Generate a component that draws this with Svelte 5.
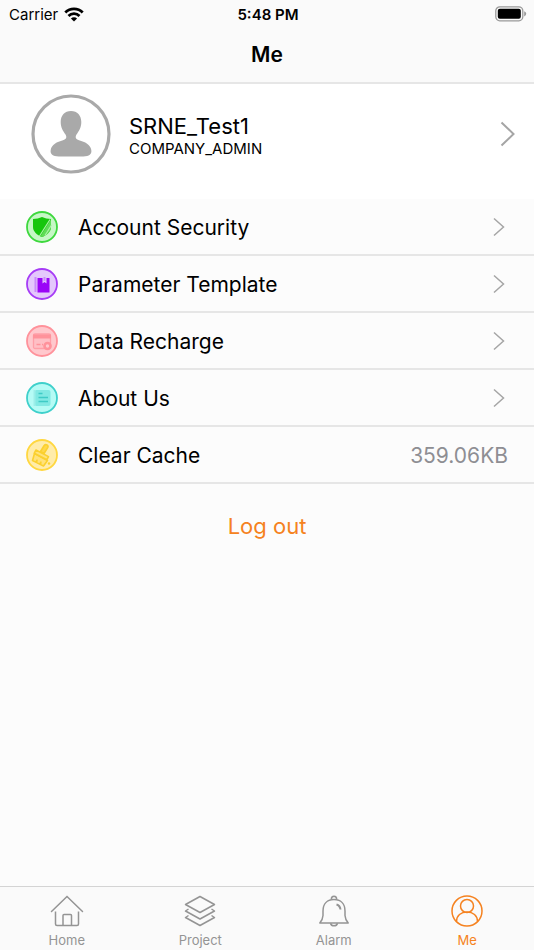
<script>
  const user = { name: 'SRNE_Test1', role: 'COMPANY_ADMIN' }

  const rows = [
    { id: 'security', label: 'Account Security', edge: '#3ed83e', fill: '#c6f7c6' },
    { id: 'template', label: 'Parameter Template', edge: '#a63cf6', fill: '#e4c8fc' },
    { id: 'recharge', label: 'Data Recharge', edge: '#ff929b', fill: '#ffc8cd' },
    { id: 'about', label: 'About Us', edge: '#3fd0cb', fill: '#b5fbf5' },
    { id: 'cache', label: 'Clear Cache', edge: '#ffd740', fill: '#ffecaa', value: '359.06KB' }
  ]

  const tabs = ['Home', 'Project', 'Alarm', 'Me']
  let active = 'Me'
</script>

<div class="screen">
  <header>
    <div class="status">
      <div class="carrier">
        <span>Carrier</span>
        <svg width="20" height="15" viewBox="0 0 20 15" aria-hidden="true">
          <g fill="none" stroke="#000" stroke-width="2.8">
            <path d="M1.3 5.5a12.4 12.4 0 0 1 17.4 0" />
            <path d="M4.5 8.9a7.8 7.8 0 0 1 11 0" />
          </g>
          <path d="M10 14.6l-3.1-3.1a4.4 4.4 0 0 1 6.2 0z" />
        </svg>
      </div>
      <time>5:48 PM</time>
      <div class="battery">
        <svg width="32" height="16" viewBox="0 0 32 16" aria-hidden="true">
          <rect x="0.8" y="0.8" width="27" height="14" rx="4" fill="none" stroke="#999" stroke-width="1.3" />
          <rect x="2.8" y="2.8" width="23" height="10" rx="2" />
          <path d="M29.2 5.2q2 .8 2 2.6t-2 2.6z" fill="#999" />
        </svg>
      </div>
    </div>
    <h1>Me</h1>
  </header>

  <button class="profile">
    <svg width="80" height="80" viewBox="0 0 80 80" aria-hidden="true">
      <circle cx="40" cy="40" r="38" fill="none" stroke="#a9a9a9" stroke-width="3.2" />
      <path fill="#a9a9a9" d="M40 17c-6.3 0-10.3 4.600-10.3 11 0 5.500 2.300 9 4.800 12.500 1.600 2.800.8 4.700-2.500 5.700-6 1.600-11.500 4.300-12.300 9.800-.7 4.300 2 6.200 8 6.500h24.600c6-.3 8.700-2.200 8-6.500-.8-5.500-6.300-8.200-12.300-9.800-3.300-1-4.100-2.900-2.500-5.700 2.500-3.500 4.800-7 4.800-12.500 0-6.400-4-11-10.300-11z" />
    </svg>
    <span class="who">
      <span class="name">{user.name}</span>
      <span class="role">{user.role}</span>
    </span>
    <svg width="16" height="26" viewBox="0 0 16 26" aria-hidden="true">
      <path d="M1.5 1.5L13.5 13L1.5 24.5" fill="none" stroke="#a5a5a5" stroke-width="2" />
    </svg>
  </button>

  <ul>
    {#each rows as row (row.id)}
      <li>
        <button class="row">
          <svg width="32" height="32" viewBox="0 0 32 32" aria-hidden="true">
            <circle cx="16" cy="16" r="15" fill={row.fill} stroke={row.edge} stroke-width="1.8" />
            {#if row.id === 'security'}
              <path d="M16 6q4 2 9 2v8c0 4.500-4 8-9 10-5-2-9-5.500-9-10V8q5 0 9-2z" fill="#16c60c" />
              <path d="M25 8.500v7.500c0 4.500-4 8-9 10l-1.500-.7z" fill="#5fdc57" />
              <path d="M24 8.500L13.500 25M25.500 14L19 24.500" fill="none" stroke="#a9f2a4" stroke-width="1.2" />
            {:else if row.id === 'template'}
              <path d="M9.5 9v15" stroke="#c98bfa" stroke-width="2" />
              <path d="M11.5 10h5v5.500l2-1.500 2 1.500V10h3v14.500h-12z" fill="#9a05f7" />
              <path d="M17.5 9h2v4.500l-1-.8-1 .8z" fill="#c98bfa" />
            {:else if row.id === 'recharge'}
              <rect x="7.5" y="9" width="17" height="14.5" rx="1.5" fill="#ffbfc5" stroke="#ff9fa8" stroke-width="1.3" />
              <path d="M7 11.500h18" stroke="#ff929b" stroke-width="4" />
              <path d="M10.5 19.500h4M16 19.500h1" stroke="#ff929b" stroke-width="1.4" />
              <circle cx="21.500" cy="21" r="3" fill="#ffc8cd" stroke="#ff929b" stroke-width="2.6" />
            {:else if row.id === 'about'}
              <rect x="8.5" y="8" width="16" height="16" rx="2" fill="#82e9e3" />
              <path d="M12.500 11.500h4M12.500 15.500h9.500M12.500 19.500h9.500" stroke="#3fcbc6" stroke-width="1.4" />
              <path d="M8.5 8v16" stroke="#9ceee9" stroke-width="2" />
            {:else}
              <g fill="#ffe27a" stroke="#fbd02e" stroke-width="1.6" stroke-linejoin="round">
                <path d="M14.500 12.500l3.700-6q1.200-1.500 2.800-.6 1.600 1 .7 2.700L18 14.500z" fill="#ffd84a" />
                <path d="M8.500 14.500L6.500 21.500l3.200 1.600 1.300-2-.4 2.500 3 1.500 1.300-2-.4 2.500 3 1.400 4-5.500z" />
                <path d="M10 11l12.500 6.600-1.700 3.200-12.500-6.600z" />
              </g>
              <circle cx="23" cy="24.500" r="1.2" fill="#fbd02e" />
            {/if}
          </svg>
          <span class="label">{row.label}</span>
          {#if row.value}
            <span class="value">{row.value}</span>
          {:else}
            <svg class="chevron" width="12" height="20" viewBox="0 0 12 20" aria-hidden="true">
              <path d="M1 1.5L10.5 10L1 18.5" fill="none" stroke="#a5a5a5" stroke-width="1.5" />
            </svg>
          {/if}
        </button>
      </li>
    {/each}
  </ul>

  <button class="logout">Log out</button>

  <nav>
    {#each tabs as tab}
      <button class="tab" class:active={tab === active} on:click={() => active = tab}>
        <svg width="34" height="34" viewBox="0 0 34 34" fill="none" stroke="currentColor" stroke-width="1.5" aria-hidden="true">
          {#if tab === 'Home'}
            <path d="M1.500 17.500L17 2.500l15.500 15" stroke-linecap="round" />
            <path d="M5.500 17.500V30q0 1.500 1.500 1.500h20q1.500 0 1.500-1.500V17.500M13 31.500V21.500q0-1 1-1h6.500q1 0 1 1v10" />
          {:else if tab === 'Project'}
            <g stroke-linejoin="round">
              <path d="M17 2.500l14.500 8L17 18.500l-14.500-8z" />
              <path d="M5.500 15l-3 2L17 25l14.500-8-3-2" />
              <path d="M5.500 21.500l-3 2L17 31.500l14.500-8-3-2" />
            </g>
          {:else if tab === 'Alarm'}
            <path d="M2.800 29q3-3.500 3.200-7.500V17C6 9.500 10.500 5.500 17 5.500S28 9.500 28 17v4.500q.2 4 3.200 7.500z" stroke-linejoin="round" />
            <path d="M14.300 5.500c0-4.500 5.400-4.500 5.400 0M13.500 29.200c1 3.500 6 3.500 7 0" />
            <path d="M19.500 10.500q3.500 1 4 5" stroke-width="2" />
          {:else}
            <circle cx="17" cy="17" r="15" />
            <circle cx="17" cy="12" r="6.500" />
            <path d="M6.500 27.500c0-6 4.500-9.500 10.500-9.500s10.500 3.500 10.500 9.500" />
          {/if}
        </svg>
        <span>{tab}</span>
      </button>
    {/each}
  </nav>
</div>

<style>
  :global(body) {
    margin: 0;
    background: #fcfcfc;
  }
  .screen {
    min-height: 100vh;
    display: flex;
    flex-direction: column;
    font-family: Inter, "Liberation Sans", sans-serif;
    color: #000;
  }
  header {
    background: #fafafa;
    border-bottom: 2px solid #e6e6e6;
  }
  .status {
    display: grid;
    grid-template-columns: 1fr auto 1fr;
    align-items: center;
    height: 28px;
    padding: 0 7px 0 9px;
    font-size: 15px;
  }
  .carrier {
    display: flex;
    align-items: center;
    gap: 6px;
  }
  .status svg {
    display: block;
  }
  time {
    font-weight: 600;
  }
  .battery {
    justify-self: end;
  }
  h1 {
    margin: 0;
    height: 54px;
    line-height: 54px;
    text-align: center;
    font-size: 21px;
    font-weight: 600;
  }
  button {
    font: inherit;
    color: inherit;
    background: none;
    border: 0;
    padding: 0;
    cursor: pointer;
  }
  .profile {
    display: flex;
    align-items: center;
    padding: 10px 18px 25px 31px;
    background: #fff;
    text-align: left;
  }
  .who {
    flex: 1;
    display: flex;
    flex-direction: column;
    margin-left: 18px;
    padding-top: 3px;
  }
  .name {
    font-size: 22px;
    line-height: 26px;
  }
  .role {
    font-size: 15px;
    line-height: 20px;
  }
  ul {
    list-style: none;
    margin: 0;
    padding: 0;
  }
  li {
    border-bottom: 2px solid #e6e6e6;
  }
  .row {
    display: flex;
    align-items: center;
    width: 100%;
    height: 55px;
    padding: 0 26px;
    font-size: 21px;
    text-align: left;
  }
  .label,
  .value {
    padding-top: 2px;
  }
  .label {
    flex: 1;
    margin-left: 20px;
  }
  .value {
    color: #8e8e93;
  }
  .chevron {
    margin-right: 3px;
  }
  .logout {
    align-self: center;
    margin-top: 22px;
    padding: 6px 12px;
    font-size: 22px;
    line-height: 28px;
    color: #f58220;
  }
  nav {
    display: flex;
    margin-top: auto;
    background: #fafafa;
    border-top: 1px solid #d4d4d4;
  }
  .tab {
    flex: 1;
    display: flex;
    flex-direction: column;
    align-items: center;
    padding: 7px 0 2px;
    font-size: 13px;
    line-height: 16px;
    gap: 4px;
    color: #949494;
  }
  .tab.active {
    color: #f58220;
  }
</style>
